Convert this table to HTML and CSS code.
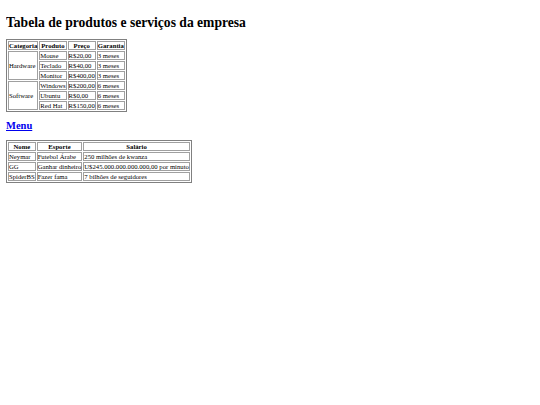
FILE: index.html
```html
<!DOCTYPE html>
<html lang="pt">
<head>
<meta charset="utf-8">
<title>Tabela</title>
<link rel="stylesheet" href="styles.css">
</head>
<body>
<h1 class="title">Tabela de produtos e serviços da empresa</h1>
<table class="grid">
<tr><th>Categoria</th><th>Produto</th><th>Preço</th><th>Garantia</th></tr>
<tr><td rowspan="3">Hardware</td><td>Mouse</td><td>R$20,00</td><td>3 meses</td></tr>
<tr><td>Teclado</td><td>R$40,00</td><td>3 meses</td></tr>
<tr><td>Monitor</td><td>R$400,00</td><td>3 meses</td></tr>
<tr><td rowspan="3">Software</td><td>Windows</td><td>R$200,00</td><td>6 meses</td></tr>
<tr><td>Ubuntu</td><td>R$0,00</td><td>6 meses</td></tr>
<tr><td>Red Hat</td><td>R$150,00</td><td>6 meses</td></tr>
</table>
<h2 class="subtitle"><a class="link" href="#">Menu</a></h2>
<table class="grid">
<tr><th>Nome</th><th>Esporte</th><th>Salário</th></tr>
<tr><td>Neymar</td><td>Futebol Árabe</td><td>250 milhões de kwanza</td></tr>
<tr><td>GG</td><td>Ganhar dinheiro</td><td>U$245.000.000.000.000,00 por minuto</td></tr>
<tr><td>SpiderBS</td><td>Fazer fama</td><td>7 bilhões de seguidores</td></tr>
</table>
</body>
</html>
```
FILE: styles.css
```css
html { background: #fff; }
body {
  margin: 6px;
  font-family: "Liberation Serif", "Times New Roman", serif;
  font-size: 6.7px;
  color: #000;
}
.title {
  font-size: 13.6px;
  font-weight: bold;
  margin: 9px 0 8px;
}
.subtitle {
  font-size: 10.5px;
  font-weight: bold;
  margin: 8px 0 9px;
}
.link { color: #0000ee; text-decoration: underline; }
.grid {
  border: 1px solid #808080;
  border-spacing: 1px;
  font-size: 6.7px;
}
.grid th, .grid td {
  border: 1px solid #a0a0a0;
  padding: 0;
  line-height: 7px;
}
.grid th { font-weight: bold; text-align: center; }
.grid td { text-align: left; }
```
